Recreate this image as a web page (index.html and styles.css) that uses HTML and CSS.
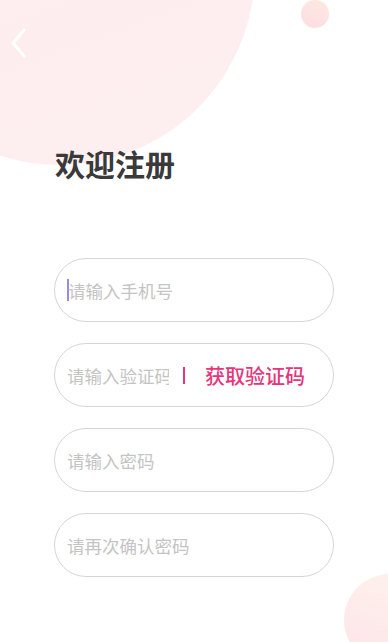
FILE: index.html
```html
<!DOCTYPE html>
<html lang="zh-CN">
<head>
    <meta charset="UTF-8">
    <meta name="viewport" content="width=device-width, initial-scale=1.0">
    <title>欢迎注册</title>
    <link rel="stylesheet" href="styles.css">
</head>
<body>
    <div class="page">
        <!-- decorative bubbles -->
        <div class="bubble bubble-big"></div>
        <div class="bubble bubble-small"></div>
        <div class="bubble bubble-corner"></div>

        <div class="header">
            <button class="back" aria-label="返回">
                <svg width="16" height="30" viewBox="0 0 16 30">
                    <polyline points="13,2 2,15 13,28" fill="none" stroke="#fff" stroke-width="3" stroke-linecap="round" stroke-linejoin="round"/>
                </svg>
            </button>
        </div>

        <h1 class="title">欢迎注册</h1>

        <form class="form">
            <div class="field">
                <span class="caret"></span>
                <input type="tel" placeholder="请输入手机号">
            </div>
            <div class="field">
                <input class="code-input" type="text" placeholder="请输入验证码">
                <span class="divider"></span>
                <button type="button" class="get-code">获取验证码</button>
            </div>
            <div class="field">
                <input type="password" placeholder="请输入密码">
            </div>
            <div class="field">
                <input type="password" placeholder="请再次确认密码">
            </div>
        </form>
    </div>
</body>
</html>
```

FILE: styles.css
```css
* {
    margin: 0;
    padding: 0;
    box-sizing: border-box;
}

:root {
    --accent: #e6357a;
    --text-dark: #3a3a3a;
    --placeholder: #c4c4c4;
    --line: #d6d6d6;
}

body {
    font-family: "Noto Sans CJK SC", "Noto Sans", sans-serif;
    background: #ffffff;
}

.page {
    position: relative;
    width: 388px;
    height: 642px;
    overflow: hidden;
}

/* Background bubbles */
.bubble {
    position: absolute;
    border-radius: 50%;
    z-index: 0;
}

.bubble-big {
    left: -135px;
    top: -225px;
    width: 390px;
    height: 390px;
    background: linear-gradient(160deg, #fef1f2 0%, #fdedef 60%, #fdeff0 100%);
}

.bubble-small {
    left: 301px;
    top: 0;
    width: 28px;
    height: 28px;
    background: linear-gradient(200deg, #fde9e0 0%, #fcdde2 100%);
}

.bubble-corner {
    left: 344px;
    top: 574px;
    width: 92px;
    height: 92px;
    background: linear-gradient(200deg, #fef2ed 0%, #fde3e8 100%);
}

/* Header */
.header {
    position: relative;
    z-index: 1;
    padding: 28px 0 0 11px;
    height: 60px;
}

.back {
    background: none;
    border: none;
    padding: 0;
    width: 16px;
    height: 30px;
}

.title {
    position: relative;
    z-index: 1;
    margin: 83px 0 0 55px;
    font-size: 30px;
    line-height: 40px;
    font-weight: 700;
    color: var(--text-dark);
}

/* Form */
.form {
    position: relative;
    z-index: 1;
    display: flex;
    flex-direction: column;
    gap: 21px;
    margin: 75px 0 0 54px;
    width: 280px;
}

.field {
    display: flex;
    align-items: center;
    height: 64px;
    padding: 0 12px;
    border: 1px solid var(--line);
    border-radius: 32px;
    background: transparent;
}

.field input {
    flex: 1;
    min-width: 0;
    border: none;
    outline: none;
    background: transparent;
    font-family: inherit;
    font-size: 17.5px;
    color: var(--text-dark);
}

.field input::placeholder {
    color: var(--placeholder);
}

.caret {
    width: 2px;
    height: 22px;
    margin-right: -1px;
    background: #9c8ae0;
}

.code-input {
    flex: 0 0 102px !important;
}

.divider {
    width: 2px;
    height: 17px;
    margin-left: 14px;
    background: var(--accent);
}

.get-code {
    margin-left: 20px;
    border: none;
    background: none;
    font-family: inherit;
    font-size: 20px;
    font-weight: 500;
    color: var(--accent);
}
```
